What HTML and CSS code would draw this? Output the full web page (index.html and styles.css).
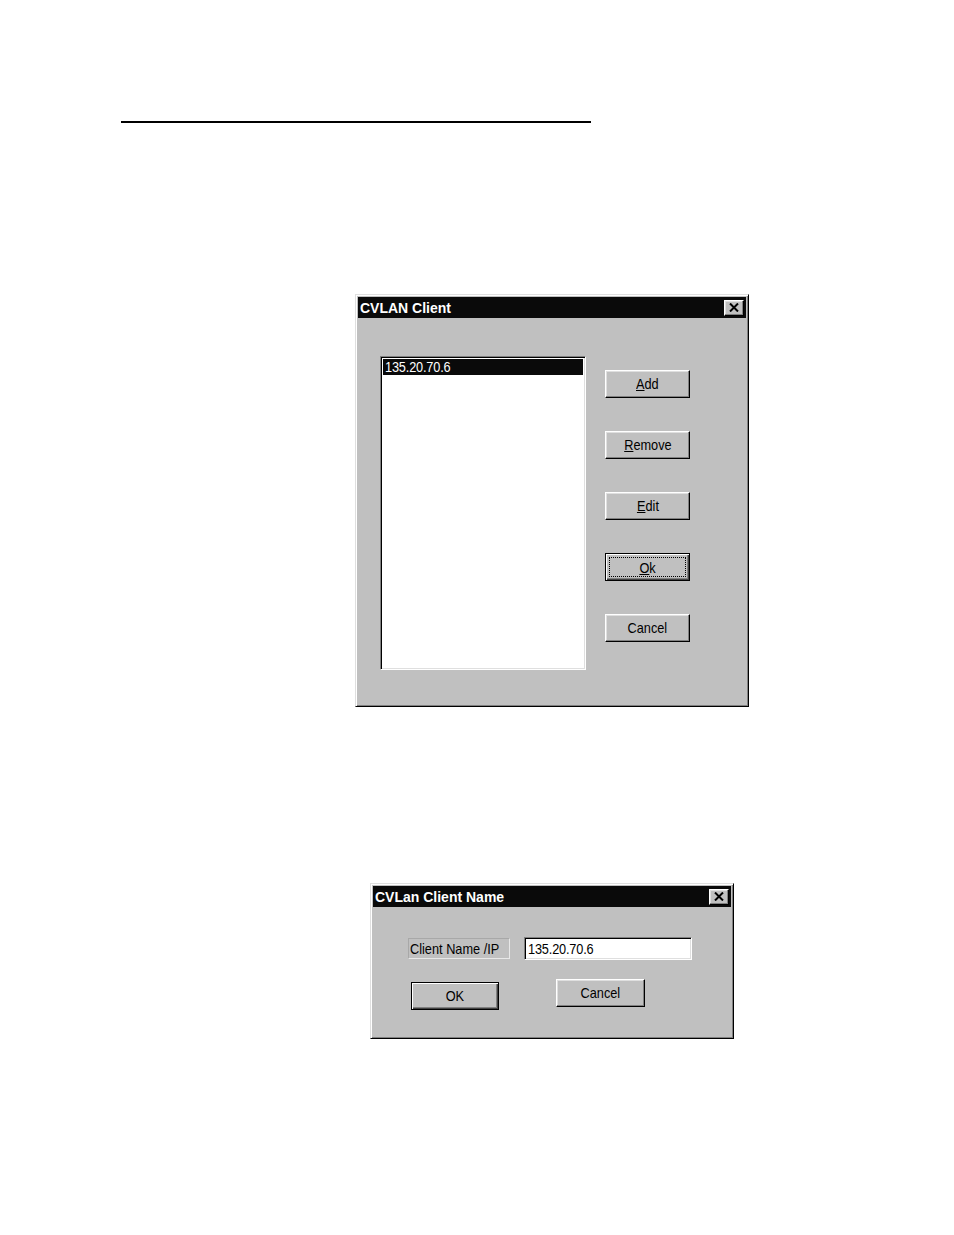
FILE: index.html
```html
<!DOCTYPE html>
<html>
<head>
<meta charset="utf-8">
<title>CVLAN Client</title>
<link rel="stylesheet" href="styles.css">
</head>
<body>
<div class="page">
  <div class="rule"></div>

  <div class="window w1">
    <div class="titlebar">
      <span class="title">CVLAN Client</span>
      <span class="close"><svg width="10" height="9" viewBox="0 0 10 9"><path d="M1 0.5 L9 8.5 M9 0.5 L1 8.5" stroke="#000" stroke-width="2"/></svg></span>
    </div>
    <div class="w1-body">
      <div class="listbox">
        <div class="item sel"><span class="t left ip">135.20.70.6</span></div>
      </div>
      <div class="btn-col">
        <div class="btn"><span class="t"><u>A</u>dd</span></div>
        <div class="btn"><span class="t"><u>R</u>emove</span></div>
        <div class="btn"><span class="t"><u>E</u>dit</span></div>
        <div class="btn default"><span class="focus"><span class="t"><u>O</u>k</span></span></div>
        <div class="btn"><span class="t">Cancel</span></div>
      </div>
    </div>
  </div>

  <div class="window w2">
    <div class="titlebar">
      <span class="title">CVLan Client Name</span>
      <span class="close"><svg width="10" height="9" viewBox="0 0 10 9"><path d="M1 0.5 L9 8.5 M9 0.5 L1 8.5" stroke="#000" stroke-width="2"/></svg></span>
    </div>
    <div class="w2-body">
      <div class="row1">
        <div class="label"><span class="t left">Client Name /IP</span></div>
        <div class="input"><span class="t left ip">135.20.70.6</span></div>
      </div>
      <div class="row2">
        <div class="btn default ok"><span class="t">OK</span></div>
        <div class="btn cancel2"><span class="t">Cancel</span></div>
      </div>
    </div>
  </div>
</div>
</body>
</html>
```

FILE: styles.css
```css
* { box-sizing: border-box; }

body {
  margin: 0;
  background: #fff;
  font-family: "Liberation Sans", Arial, sans-serif;
  font-size: 15px;
  color: #000;
}

.page {
  padding-top: 121px;
  padding-bottom: 40px;
}

.rule {
  margin-left: 121px;
  width: 470px;
  height: 2px;
  background: #000;
}

/* condensed text, like MS Sans Serif */
.t {
  display: inline-block;
  white-space: nowrap;
  transform: scaleX(0.85);
  transform-origin: center center;
}

.t.left { transform-origin: left center; }

.ip { letter-spacing: -0.2px; }

/* Window frame */
.window {
  background: #c0c0c0;
  border: 1px solid;
  border-color: #dfdfdf #000 #000 #dfdfdf;
  box-shadow: inset 1px 1px #fff, inset -1px -1px #808080;
  padding: 2px;
  display: flex;
  flex-direction: column;
}

.titlebar {
  height: 21px;
  background: #0a0a0a;
  display: flex;
  align-items: center;
  justify-content: space-between;
  padding-left: 2px;
  padding-right: 2px;
}

.title {
  color: #fff;
  font-weight: bold;
  font-size: 14px;
}

.close {
  width: 20px;
  height: 16px;
  background: #c0c0c0;
  border: 1px solid;
  border-color: #fff #000 #000 #fff;
  box-shadow: inset -1px -1px #808080, inset 1px 1px #dfdfdf;
  display: flex;
  align-items: center;
  justify-content: center;
}

.close svg { display: block; }

/* Dialog 1 */
.w1 {
  margin-top: 171px;
  margin-left: 355px;
  width: 394px;
  height: 413px;
}

.w1-body {
  display: flex;
  align-items: flex-start;
  padding-top: 38px;
  padding-left: 22px;
}

.listbox {
  width: 206px;
  height: 314px;
  background: #fff;
  border: 1px solid;
  border-color: #808080 #fff #fff #808080;
  box-shadow: inset 1px 1px #000, inset -1px -1px #dfdfdf;
  padding: 2px;
}

.item {
  height: 16px;
  line-height: 16px;
  padding-left: 2px;
}

.item.sel {
  background: #0a0a0a;
  color: #fff;
}

.btn-col {
  margin-left: 19px;
  margin-top: 14px;
  display: flex;
  flex-direction: column;
  gap: 33px;
}

.btn {
  width: 85px;
  height: 28px;
  background: #c0c0c0;
  border: 1px solid;
  border-color: #fff #000 #000 #fff;
  box-shadow: inset -1px -1px #808080, inset 1px 1px #dfdfdf;
  display: flex;
  align-items: center;
  justify-content: center;
  padding-bottom: 1px;
}

.btn.default {
  border-color: #000;
  box-shadow: inset 1px 1px #fff, inset -1px -1px #404040, inset -2px -2px #808080;
}

.focus {
  flex: 1;
  align-self: stretch;
  margin: 3px 3px 2px 3px;
  border: 1px dotted #000;
  display: flex;
  align-items: center;
  justify-content: center;
}

/* Dialog 2 */
.w2 {
  margin-top: 176px;
  margin-left: 370px;
  width: 364px;
  height: 156px;
}

.w2-body {
  padding-top: 30px;
}

.row1 {
  display: flex;
  align-items: center;
  padding-left: 35px;
}

.label {
  width: 102px;
  height: 21px;
  border: 1px solid;
  border-color: #a8a8a8 #e8e8e8 #e8e8e8 #a8a8a8;
  display: flex;
  align-items: center;
  padding-left: 1px;
  overflow: hidden;
}

.input {
  margin-left: 14px;
  width: 168px;
  height: 23px;
  background: #fff;
  border: 1px solid;
  border-color: #808080 #fff #fff #808080;
  box-shadow: inset 1px 1px #000, inset -1px -1px #dfdfdf;
  display: flex;
  align-items: center;
  padding-left: 3px;
}

.row2 {
  display: flex;
  align-items: flex-start;
  margin-top: 19px;
  padding-left: 38px;
}

.btn.ok {
  width: 88px;
  margin-top: 3px;
}

.btn.cancel2 {
  width: 89px;
  margin-left: 57px;
}
```
